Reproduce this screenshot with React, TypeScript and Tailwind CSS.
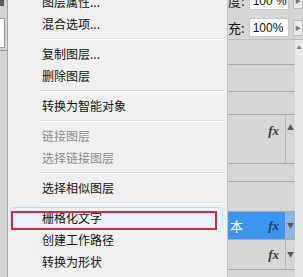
import React from "react"

type MenuEntry = { label: string; disabled?: boolean; hover?: boolean } | "sep"

const entries: MenuEntry[] = [
  { label: "图层属性..." },
  { label: "混合选项..." },
  "sep",
  { label: "复制图层..." },
  { label: "删除图层" },
  "sep",
  { label: "转换为智能对象" },
  "sep",
  { label: "链接图层", disabled: true },
  { label: "选择链接图层", disabled: true },
  "sep",
  { label: "选择相似图层" },
  "sep",
  { label: "栅格化文字", hover: true },
  { label: "创建工作路径" },
  { label: "转换为形状" },
]

function LayerRow({
  h,
  fx,
  selected,
  up,
  top,
}: {
  h: string
  fx?: boolean
  selected?: boolean
  up?: boolean
  top?: boolean
}) {
  const align = top ? "items-start pt-[9px]" : "items-center"
  return (
    <div className={"flex border-b border-[#a9a9a9] leading-none " + h}>
      <div
        className={
          "flex flex-1 justify-between pl-[2px] pr-[6px] " +
          align +
          (selected ? " bg-[#3d95f2]" : "")
        }
      >
        {selected ? (
          <span className="text-[13px] leading-none text-white">本</span>
        ) : (
          <span />
        )}
        {fx && (
          <span
            className={
              "font-['Liberation_Serif'] text-[13px] font-bold italic leading-none " +
              (selected ? "text-[#1d3f6b]" : "text-[#3a3a3a]")
            }
          >
            fx
          </span>
        )}
      </div>
      {fx ? (
        <div
          className={
            "flex w-[10px] justify-center border-l border-[#b5b5b5] text-[7px] leading-none text-[#555] " +
            align +
            (selected ? " bg-[#8fb6de]" : "")
          }
        >
          {up ? "▲" : "▼"}
        </div>
      ) : (
        <div className="w-[10px]" />
      )}
    </div>
  )
}

export default function App(): React.ReactElement {
  return (
    <div className="flex h-[277px] w-[303px] overflow-hidden bg-[#d6d6d6] font-['Noto_Sans_CJK_SC','Microsoft_YaHei',sans-serif]">
      {/* Left strip */}
      <div className="flex w-[8px] flex-col border-r border-[#a7a7a7] bg-[#d3d3d3]">
        <div className="h-[6px] w-[4px] bg-[#5a5a5a]" />
        <div className="mt-[12px] h-[30px] w-[5px] border-y border-r border-[#9a9a9a] bg-white" />
        <div className="mt-[2px] h-px w-full bg-[#9a9a9a]" />
      </div>

      {/* Context menu */}
      <div className="flex w-[220px] flex-col border-r border-[#c4c4c4] bg-[#f0f0f0]">
        <div className="mt-[-9px] flex flex-col">
          {entries.map((e, i) =>
            e === "sep" ? (
              <div key={i} className="flex h-[8px] items-center pl-[30px] pr-[3px]">
                <div className="h-[2px] w-full border-t border-[#e0e0e0] border-b border-b-white" />
              </div>
            ) : (
              <div
                key={i}
                className={
                  "relative flex h-[22px] items-center pl-[34px] text-[12px] leading-none " +
                  (e.disabled ? "text-[#8e8e8e]" : "text-[#111]")
                }
              >
                {e.hover && (
                  <div className="absolute inset-y-0 left-[2px] right-[4px] rounded-[3px] border border-[#c5dbf4] bg-[#eaf1fb]" />
                )}
                <span className="relative">{e.label}</span>
                {e.hover && (
                  <div className="absolute left-[3px] top-[4px] h-[19px] w-[206px] border-2 border-[#d42b45]" />
                )}
              </div>
            )
          )}
        </div>
      </div>

      {/* Layers panel */}
      <div className="flex w-[75px] flex-col">
        <div className="flex h-[40px] flex-col border-b border-[#bdbdbd]">
          <div className="mt-[-9px] flex h-[19px] items-center">
            <span className="w-[21px] text-[13px] leading-none text-[#111]">度:</span>
            <div className="flex h-full w-[41px] items-center border border-[#c9c9c9] bg-white pl-[3px] font-['Liberation_Sans'] text-[12px] text-[#111]">
              100 %
            </div>
            <div className="ml-[4px] flex h-[16px] w-[10px] items-center justify-center border border-[#bfbfbf] bg-[#ececec] text-[6px] text-[#777]">
              ▶
            </div>
          </div>
          <div className="mt-[8px] flex h-[19px] items-center">
            <span className="w-[21px] text-[13px] leading-none text-[#111]">充:</span>
            <div className="flex h-full w-[41px] items-center border border-[#c9c9c9] bg-white pl-[3px] font-['Liberation_Sans'] text-[12px] text-[#111]">
              100%
            </div>
            <div className="ml-[4px] flex h-[16px] w-[10px] items-center justify-center border border-[#bfbfbf] bg-[#ececec] text-[6px] text-[#777]">
              ▶
            </div>
          </div>
        </div>
        <div className="flex flex-1">
          <div className="flex w-[67px] flex-col">
            <LayerRow h="h-[25px]" />
            <LayerRow h="h-[27px]" />
            <LayerRow h="h-[23px]" />
            <LayerRow h="h-[49px]" fx up top />
            <LayerRow h="h-[18px]" />
            <LayerRow h="h-[30px]" />
            <LayerRow h="h-[28px]" fx selected />
            <LayerRow h="h-[30px]" fx />
          </div>
          <div className="flex w-[8px] flex-col items-center bg-[#e9e9e9] pt-[4px] text-[5px] leading-none text-[#888]">
            ▲
          </div>
        </div>
      </div>
    </div>
  )
}
